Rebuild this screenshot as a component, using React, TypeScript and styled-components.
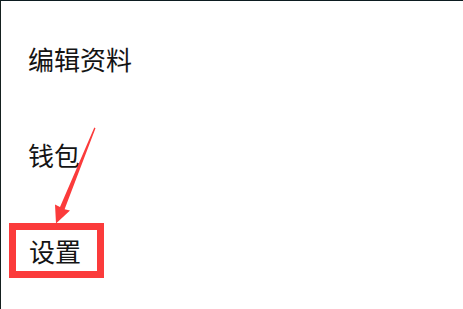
import React from 'react';
import styled, { createGlobalStyle } from 'styled-components';

interface MenuItem {
  label: string;
  highlighted?: boolean;
}

const items: MenuItem[] = [
  { label: '编辑资料' },
  { label: '钱包' },
  { label: '设置', highlighted: true },
];

const GlobalStyle = createGlobalStyle`
  html, body {
    margin: 0;
    padding: 0;
    background: #ffffff;
  }
  body {
    font-family: "Noto Sans CJK SC", "Noto Sans", sans-serif;
  }
`;

const Screen = styled.main`
  position: relative;
  box-sizing: border-box;
  width: 463px;
  height: 309px;
  overflow: hidden;
  background: #ffffff;
  border-top: 1px solid #0c1b20;
  border-left: 1px solid #15201f;
  padding-top: 9px;
`;

const List = styled.ul`
  list-style: none;
  margin: 0;
  padding: 0;
  display: flex;
  flex-direction: column;
`;

const Row = styled.li`
  height: 96px;
  display: flex;
  align-items: center;
  padding-left: 27px;
`;

const Label = styled.span<{ $highlighted?: boolean }>`
  color: #141414;
  font-size: 26px;
  font-weight: 400;
  line-height: 41px;
  white-space: nowrap;
  ${({ $highlighted }) =>
    $highlighted
      ? `
    margin-left: -19px;
    padding: 0 16px 0 13px;
    border: 7px solid #fb3b3b;
  `
      : ''}
`;

const Annotation = styled.svg`
  position: absolute;
  left: 0;
  top: 0;
  width: 463px;
  height: 309px;
  pointer-events: none;
`;

const App: React.FC = () => (
  <>
    <GlobalStyle />
    <Screen>
      <List>
        {items.map((item) => (
          <Row key={item.label}>
            <Label $highlighted={item.highlighted}>{item.label}</Label>
          </Row>
        ))}
      </List>
      <Annotation viewBox="0 0 463 309">
        <polygon
          fill="#fb3b3b"
          points="93.3,126.6 59,206 54,203.4 55,222.5 69,209.6 63.6,208.2 94.5,127.2"
        />
      </Annotation>
    </Screen>
  </>
);

export default App;
